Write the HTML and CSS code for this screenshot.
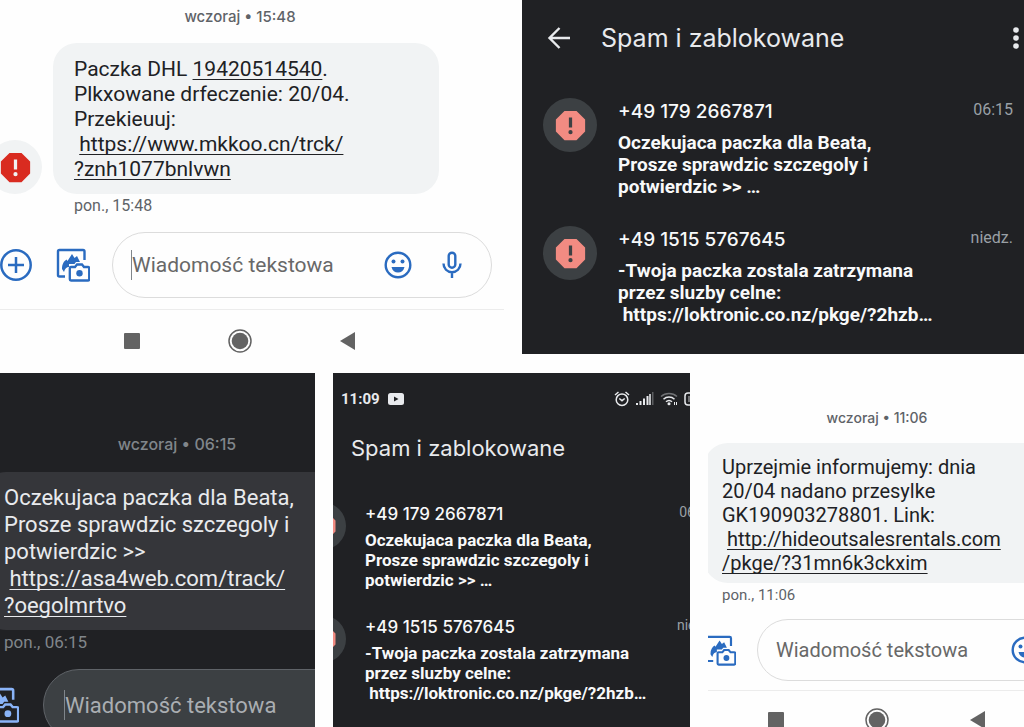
FILE: index.html
```html
<!DOCTYPE html>
<html lang="pl">

<head>
    <meta charset="UTF-8">
    <title>Spam i zablokowane</title>
    <link rel="stylesheet" href="styles.css">
</head>

<body>
    <!-- shared icons -->
    <svg class="sprite" aria-hidden="true">
        <symbol id="report" viewBox="0 0 24 24">
            <path d="M15.7 3H8.3L3 8.3v7.4L8.3 21h7.4l5.3-5.3V8.3L15.7 3zM12 17.400a1.300 1.300 0 1 1 0-2.600 1.300 1.300 0 0 1 0 2.600zm1-4.200h-2V7h2v6.200z" />
        </symbol>
        <symbol id="gallery" viewBox="0 0 34 34">
            <path d="M9 28.500H3.500a1.500 1.500 0 0 1-1.500-1.500V3.500A1.500 1.500 0 0 1 3.500 2h23.500a1.500 1.500 0 0 1 1.500 1.500V12" fill="none" stroke="currentColor" stroke-width="2.400" />
            <path d="M6 21c0-5 2-8 4.500-9.500l1 1.500L16 6l2.500 4L21 8l3 6h-4l-1.500 2H13v3c-2.500 0-4 1.500-5 5z" fill="currentColor" />
            <path d="M15 19h4l2-2.500h5l2 2.500h4a1.200 1.200 0 0 1 1.200 1.200v11.100a1.200 1.200 0 0 1-1.200 1.200H15a1.200 1.200 0 0 1-1.200-1.200V20.200A1.200 1.200 0 0 1 15 19z" fill="none" stroke="currentColor" stroke-width="2.300" />
            <circle cx="23.500" cy="25.200" r="3.200" fill="currentColor" />
        </symbol>
        <symbol id="emoji" viewBox="0 0 28 28">
            <circle cx="14" cy="14" r="12.300" fill="none" stroke="currentColor" stroke-width="2.400" />
            <circle cx="9.500" cy="10.500" r="2" fill="currentColor" />
            <circle cx="18.500" cy="10.500" r="2" fill="currentColor" />
            <path d="M7.500 16h13c-.8 3.600-3.400 5.600-6.500 5.600S8.300 19.600 7.500 16z" fill="currentColor" />
        </symbol>
        <symbol id="mic" viewBox="0 0 28 28">
            <rect x="10.700" y="1.700" width="6.600" height="15" rx="3.300" fill="none" stroke="currentColor" stroke-width="2.400" />
            <path d="M5.500 12.500c0 5 3.700 8.700 8.500 8.700s8.500-3.700 8.500-8.700M14 21v6" fill="none" stroke="currentColor" stroke-width="2.400" />
        </symbol>
        <symbol id="recent" viewBox="0 0 24 24">
            <rect x="4" y="4" width="16" height="16" rx="1" />
        </symbol>
        <symbol id="home" viewBox="0 0 24 24">
            <circle cx="12" cy="12" r="11" fill="none" stroke="currentColor" stroke-width="1.500" />
            <circle cx="12" cy="12" r="8.300" />
        </symbol>
        <symbol id="back" viewBox="0 0 24 24">
            <path d="M4 12l15-9v18z" />
        </symbol>
    </svg>

    <main class="collage">
        <div class="row row-top">
            <section class="panel chat chat-dhl">
                <p class="date">wczoraj • 15:48</p>
                <div class="message">
                    <div class="avatar"><svg><use href="#report" /></svg></div>
                    <p class="bubble">Paczka DHL <a href="#">19420514540</a>.<br>Plkxowane drfeczenie: 20/04.<br>Przekieuuj:<br>&nbsp;<a href="#">https://www.mkkoo.cn/trck/<br>?znh1077bnlvwn</a></p>
                </div>
                <p class="meta">pon., 15:48</p>
                <div class="composer">
                    <button class="icon-btn add" aria-label="Dodaj">
                        <svg viewBox="0 0 32 32"><circle cx="16" cy="16" r="14.700" fill="none" stroke="currentColor" stroke-width="2.500" /><path d="M16 8v16M8 16h16" stroke="currentColor" stroke-width="2.500" /></svg>
                    </button>
                    <button class="icon-btn gallery" aria-label="Galeria"><svg><use href="#gallery" /></svg></button>
                    <div class="field">
                        <input class="caret" type="text" placeholder="Wiadomość tekstowa" aria-label="Wiadomość tekstowa">
                        <button class="icon-btn" aria-label="Emotikony"><svg><use href="#emoji" /></svg></button>
                        <button class="icon-btn" aria-label="Nagraj"><svg><use href="#mic" /></svg></button>
                    </div>
                </div>
                <nav class="navbar">
                    <button aria-label="Ostatnie"><svg><use href="#recent" /></svg></button>
                    <button aria-label="Ekran główny"><svg><use href="#home" /></svg></button>
                    <button aria-label="Wstecz"><svg><use href="#back" /></svg></button>
                </nav>
            </section>

            <section class="panel dark spam spam-large">
                <header class="spam-header">
                    <button class="icon-btn" aria-label="Wstecz">
                        <svg viewBox="0 0 24 24"><path d="M23 12H3M12.500 2L2.500 12l10 10" fill="none" stroke="currentColor" stroke-width="2.400" /></svg>
                    </button>
                    <h1>Spam i zablokowane</h1>
                    <button class="icon-btn more" aria-label="Więcej">
                        <svg viewBox="0 0 24 24"><circle cx="12" cy="4" r="2.800" /><circle cx="12" cy="12" r="2.800" /><circle cx="12" cy="20" r="2.800" /></svg>
                    </button>
                </header>
                <ul class="threads">
                    <li>
                        <div class="avatar"><svg><use href="#report" /></svg></div>
                        <div class="thread">
                            <h2>+49 179 2667871</h2>
                            <p>Oczekujaca paczka dla Beata,<br>Prosze sprawdzic szczegoly i<br>potwierdzic &gt;&gt; …</p>
                        </div>
                        <time>06:15</time>
                    </li>
                    <li>
                        <div class="avatar"><svg><use href="#report" /></svg></div>
                        <div class="thread">
                            <h2>+49 1515 5767645</h2>
                            <p>-Twoja paczka zostala zatrzymana<br>przez sluzby celne:<br>&nbsp;https://loktronic.co.nz/pkge/?2hzb…</p>
                        </div>
                        <time>niedz.</time>
                    </li>
                </ul>
            </section>
        </div>

        <div class="row row-bottom">
            <section class="panel dark chat chat-beata">
                <p class="date">wczoraj • 06:15</p>
                <div class="message">
                    <p class="bubble">Oczekujaca paczka dla Beata,<br>Prosze sprawdzic szczegoly i<br>potwierdzic &gt;&gt;<br>&nbsp;<a href="#">https://asa4web.com/track/<br>?oegolmrtvo</a></p>
                </div>
                <p class="meta">pon., 06:15</p>
                <div class="composer">
                    <button class="icon-btn gallery" aria-label="Galeria"><svg><use href="#gallery" /></svg></button>
                    <div class="field">
                        <input class="caret" type="text" placeholder="Wiadomość tekstowa" aria-label="Wiadomość tekstowa">
                    </div>
                </div>
            </section>

            <section class="panel dark spam spam-small">
                <div class="status">
                    <span>11:09</span>
                    <svg class="play" viewBox="0 0 16 12"><rect width="16" height="12" rx="2.500" /><path d="M6 3.500v5L10.500 6z" fill="#202124" /></svg>
                    <div class="status-icons">
                        <svg class="outline" viewBox="0 0 16 16"><circle cx="8" cy="8.700" r="5.800" /><path d="M1 4l3.500-3M15 4l-3.500-3M5.300 7.500L8 9.700l2.700-2.200" /></svg>
                        <svg class="wide" viewBox="0 0 18 14"><path d="M0 11h2v2H0zM3.500 9h2v4h-2zM7 6.500h2V13H7zM10.500 4h2v9h-2z" /><path d="M13.200 2h1.600v11h-1.600z" /><path d="M16 0h1.500v13H16z" opacity=".3" /></svg>
                        <svg class="wide outline" viewBox="0 0 18 14"><path d="M1 4.500c4.500-4 11.500-4 16 0" opacity=".4" /><path d="M3.500 7.200c3-2.800 8-2.800 11 0M6 9.800c1.700-1.500 4.300-1.500 6 0" /><circle cx="9" cy="11.800" r=".8" fill="currentColor" /><path d="M14.500 10v3M16.500 10v3" stroke-width="1" /></svg>
                        <svg class="wide outline" viewBox="0 0 18 14"><rect x="1" y="1" width="20" height="12" rx="3" /><path d="M4 4h14v6H4z" fill="currentColor" opacity=".4" stroke="none" /></svg>
                    </div>
                </div>
                <header class="spam-header">
                    <h1>Spam i zablokowane</h1>
                </header>
                <ul class="threads">
                    <li>
                        <div class="avatar"><svg><use href="#report" /></svg></div>
                        <div class="thread">
                            <h2>+49 179 2667871</h2>
                            <p>Oczekujaca paczka dla Beata,<br>Prosze sprawdzic szczegoly i<br>potwierdzic &gt;&gt; …</p>
                        </div>
                        <time>06:15</time>
                    </li>
                    <li>
                        <div class="avatar"><svg><use href="#report" /></svg></div>
                        <div class="thread">
                            <h2>+49 1515 5767645</h2>
                            <p>-Twoja paczka zostala zatrzymana<br>przez sluzby celne:<br>&nbsp;https://loktronic.co.nz/pkge/?2hzb…</p>
                        </div>
                        <time>niedz.</time>
                    </li>
                </ul>
            </section>

            <section class="panel chat chat-parcel">
                <p class="date">wczoraj • 11:06</p>
                <div class="message">
                    <p class="bubble">Uprzejmie informujemy: dnia<br>20/04 nadano przesylke<br>GK190903278801. Link:<br>&nbsp;<a href="#">http://hideoutsalesrentals.com<br>/pkge/?31mn6k3ckxim</a></p>
                </div>
                <p class="meta">pon., 11:06</p>
                <div class="composer">
                    <button class="icon-btn gallery" aria-label="Galeria"><svg><use href="#gallery" /></svg></button>
                    <div class="field">
                        <input type="text" placeholder="Wiadomość tekstowa" aria-label="Wiadomość tekstowa">
                        <button class="icon-btn" aria-label="Emotikony"><svg><use href="#emoji" /></svg></button>
                    </div>
                </div>
                <nav class="navbar">
                    <button aria-label="Ostatnie"><svg><use href="#recent" /></svg></button>
                    <button aria-label="Ekran główny"><svg><use href="#home" /></svg></button>
                    <button aria-label="Wstecz"><svg><use href="#back" /></svg></button>
                </nav>
            </section>
        </div>
    </main>
</body>

</html>
```

FILE: styles.css
```css
* {
    box-sizing: border-box;
}

body {
    margin: 0;
    background-color: #fefefe;
    color: #202124;
    font-family: Roboto, "Liberation Sans", sans-serif;
}

h1, h2, p, ul {
    margin: 0;
    padding: 0;
    font-weight: 400;
}

ul {
    list-style: none;
}

button {
    padding: 0;
    border: none;
    background: none;
    color: inherit;
    cursor: pointer;
}

svg {
    display: block;
    flex: none;
    fill: currentColor;
}

.outline {
    fill: none;
    stroke: currentColor;
    stroke-width: 1.5;
}

.sprite {
    display: none;
}

/* layout */

.collage {
    display: flex;
    flex-direction: column;
    gap: 19px;
    height: 100vh;
    overflow: hidden;
}

.row {
    display: grid;
    gap: 18px;
}

.row-top {
    flex: none;
    grid-template-columns: 504fr 502fr;
}

.row-bottom {
    flex: 1;
    min-height: 0;
    grid-template-columns: 315fr 357fr 316fr;
}

.panel {
    min-width: 0;
    overflow: hidden;
    white-space: nowrap;
}

.dark {
    background-color: #202124;
    color: #e8eaed;
}

/* conversations */

.date {
    color: #5f6368;
    font-family: Inter, sans-serif;
    font-weight: 500;
    font-size: 15px;
    line-height: 20px;
    text-align: center;
}

.message {
    display: flex;
    align-items: flex-end;
}

.bubble {
    border-radius: 24px;
    background-color: #f1f3f4;
}

.bubble a {
    color: inherit;
    text-decoration: underline;
    text-decoration-thickness: 1px;
    text-underline-offset: 3px;
    text-decoration-skip-ink: none;
}

.meta {
    color: #5f6368;
    font-size: 16px;
    line-height: 20px;
}

.avatar {
    display: flex;
    flex: none;
    align-items: center;
    justify-content: center;
    width: 54px;
    height: 54px;
    border-radius: 50%;
    background-color: #f1f3f4;
    color: #d92b20;
}

.avatar svg {
    width: 39px;
    height: 39px;
}

.composer {
    display: flex;
    align-items: center;
}

.icon-btn {
    flex: none;
    width: 28px;
    height: 28px;
    color: #2a6bc0;
}

.icon-btn svg {
    width: 100%;
    height: 100%;
}

.gallery {
    width: 34px;
    height: 34px;
}

.field {
    display: flex;
    flex: 1;
    align-items: center;
    min-width: 0;
    height: 66px;
    border: 1px solid #dcdcdc;
    border-radius: 36px;
}

.field input {
    flex: 1;
    min-width: 0;
    height: 30px;
    padding: 0;
    border: none;
    outline: none;
    background: none;
    color: inherit;
    font-family: inherit;
    font-size: 22px;
}

.field .caret {
    border-left: 1px solid #80868b;
}

.field input::placeholder {
    color: #686868;
    opacity: 1;
}

.navbar {
    display: flex;
    justify-content: center;
    gap: 84px;
    border-top: 1px solid #ececec;
    color: #636363;
}

.navbar svg {
    width: 24px;
    height: 24px;
}

.chat-dhl .date {
    padding: 7px 24px 0 0;
}

.chat-dhl .message {
    gap: 11px;
    margin: 16px 0 0 -12px;
}

.chat-dhl .bubble {
    width: 386px;
    padding: 14px 21px 12px;
    font-size: 21px;
    line-height: 25px;
}

.chat-dhl .meta {
    padding: 2px 0 0 74px;
}

.chat-dhl .composer {
    margin: 16px 12px 11px 0;
}

.chat-dhl .add {
    width: 32px;
    height: 32px;
    margin-right: 24px;
}

.chat-dhl .field {
    gap: 26px;
    margin-left: 22px;
    padding: 0 25px 0 18px;
}

.chat-dhl .field input {
    font-size: 21px;
}

.chat-dhl .navbar {
    padding: 19px 24px 0 0;
    height: 43px;
}

.chat-beata .date {
    padding: 61px 0 0 39px;
    color: #80868b;
    font-size: 16px;
}

.chat-beata .message {
    margin: 18px -24px 0 -18px;
}

.chat-beata .bubble {
    flex: 1;
    padding: 12px 22px 11px;
    background-color: #35363a;
    font-size: 22px;
    line-height: 27px;
}

.chat-beata .meta {
    padding: 2px 0 0 4px;
    color: #80868b;
    font-size: 17px;
}

.chat-beata .composer {
    margin: 17px -48px 0 -17px;
}

.chat-beata .gallery {
    width: 36px;
    height: 36px;
    color: #8ab4f8;
}

.chat-beata .field {
    height: 72px;
    margin-left: 24px;
    padding-left: 20px;
    border-color: #5f6368;
    background-color: #3c4043;
}

.chat-beata .field input::placeholder {
    color: #aaaeb2;
}

.chat-parcel .date {
    padding: 35px 0 0 22px;
    font-size: 14px;
}

.chat-parcel .message {
    margin: 15px -24px 0 -4px;
}

.chat-parcel .bubble {
    flex: 1;
    padding: 12px 18px 8px;
    font-size: 20px;
    line-height: 24px;
}

.chat-parcel .meta {
    padding: 2px 0 0 14px;
    font-size: 15px;
}

.chat-parcel .composer {
    margin: 14px -48px 9px -3px;
}

.chat-parcel .gallery {
    width: 31px;
    height: 31px;
}

.chat-parcel .field {
    height: 62px;
    margin-left: 21px;
    padding: 0 32px 0 18px;
}

.chat-parcel .field input {
    font-size: 20px;
}

.chat-parcel .navbar {
    gap: 77px;
    padding: 17px 0 0 22px;
}

/* spam lists */

.spam-header {
    display: flex;
    align-items: center;
}

.spam-header h1 {
    flex: 1;
    font-family: Inter, sans-serif;
    font-size: 25px;
    line-height: 32px;
}

.spam-header .icon-btn {
    width: 24px;
    height: 24px;
    color: #e8eaed;
}

.threads li {
    display: flex;
    align-items: flex-start;
}

.threads .avatar {
    background-color: #3c4043;
    color: #f28b82;
}

.thread {
    flex: 1;
    min-width: 0;
    color: #f8f9fa;
}

.thread h2 {
    font-family: Inter, sans-serif;
    font-weight: 500;
}

.thread p {
    font-weight: 700;
}

.threads time {
    color: #9aa0a6;
}

.spam-large .spam-header {
    padding: 22px 0 0 25px;
}

.spam-large h1 {
    padding-left: 30px;
}

.spam-large .more {
    margin-right: -4px;
}

.spam-large .threads {
    padding: 44px 11px 0 21px;
}

.spam-large li {
    height: 128px;
}

.spam-large .thread {
    padding: 2px 0 0 21px;
}

.spam-large h2 {
    margin-bottom: 8px;
    font-size: 19px;
    line-height: 24px;
}

.spam-large .thread p {
    font-size: 19px;
    line-height: 22px;
}

.spam-large time {
    padding-top: 2px;
    font-size: 16px;
    line-height: 20px;
}

.status {
    display: flex;
    align-items: center;
    gap: 8px;
    padding: 16px 0 0 8px;
    font-weight: 700;
    font-size: 15px;
    line-height: 20px;
}

.play {
    width: 16px;
    height: 12px;
}

.status-icons {
    display: flex;
    align-items: center;
    gap: 6px;
    margin: 0 -12px 0 auto;
}

.status-icons svg {
    width: 16px;
    height: 16px;
}

.status-icons .wide {
    width: 18px;
    height: 14px;
}

.spam-small .spam-header {
    padding: 23px 0 0 18px;
}

.spam-small h1 {
    font-size: 22px;
}

.spam-small .threads {
    padding-top: 38px;
    margin: 0 -24px 0 -35px;
}

.spam-small li {
    height: 113px;
}

.spam-small .avatar {
    width: 48px;
    height: 48px;
}

.spam-small .avatar svg {
    width: 36px;
    height: 36px;
}

.spam-small .thread {
    padding-left: 19px;
}

.spam-small h2 {
    margin-bottom: 4px;
    font-size: 17px;
    line-height: 24px;
}

.spam-small .thread p {
    font-size: 17px;
    line-height: 20px;
}

.spam-small time {
    font-size: 14px;
    line-height: 20px;
}
```
